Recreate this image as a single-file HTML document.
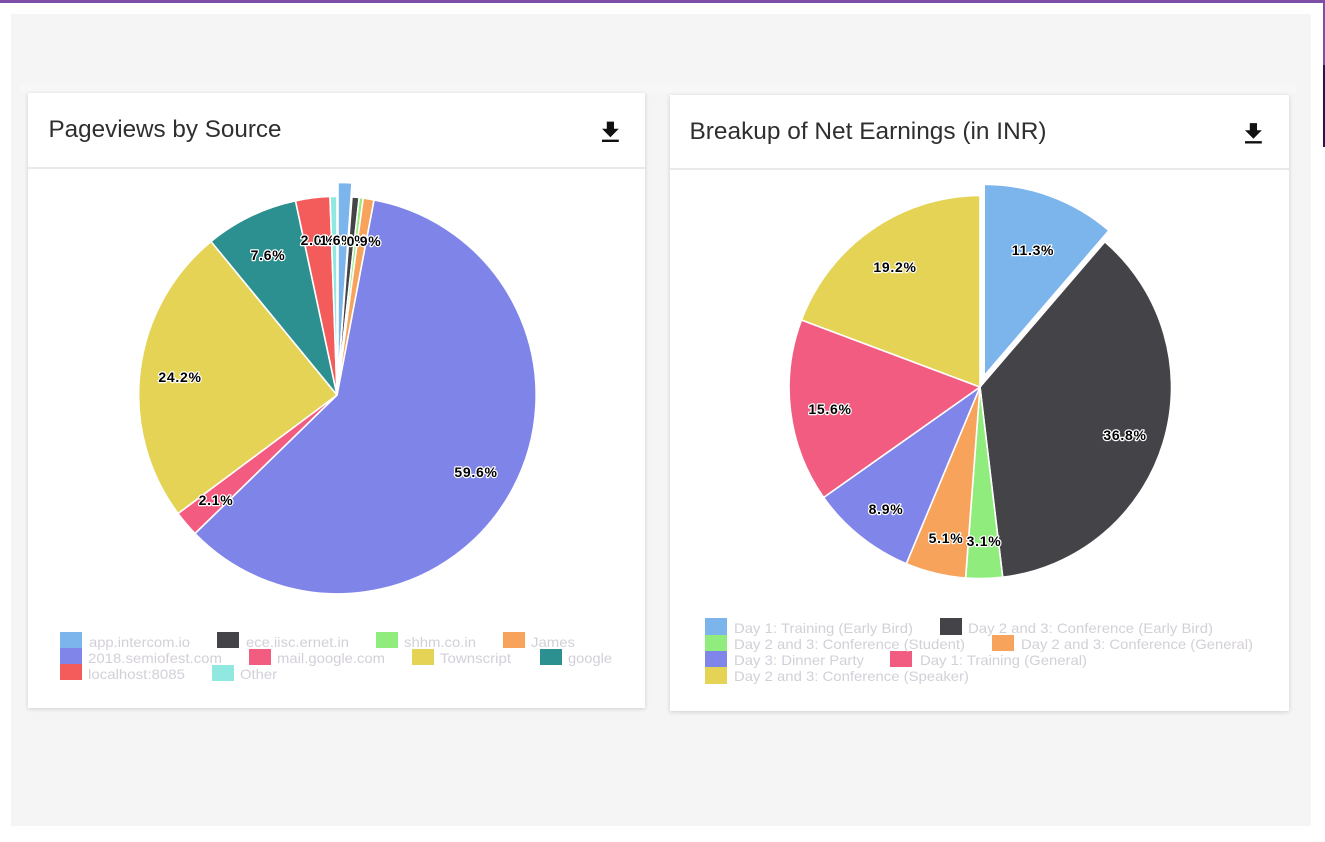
<!DOCTYPE html>
<html><head><meta charset="utf-8"><style>
html,body{margin:0;padding:0;background:#fff;width:1325px;height:842px;overflow:hidden}
svg{display:block;filter:blur(.35px)}
text{font-family:"Liberation Sans",sans-serif}
.t{font-size:24px;fill:#2f2f2f}
.l{font-size:14px;fill:#d3cfd9}
.p{font-size:14px;font-weight:bold;fill:#000;stroke:#fff;stroke-width:2.4px;paint-order:stroke;stroke-linejoin:round;text-anchor:middle;letter-spacing:.7px}
.s path{stroke:#fff;stroke-width:1.6}
</style></head><body>
<svg width="1325" height="842" viewBox="0 0 1325 842" xmlns="http://www.w3.org/2000/svg">
<defs><filter id="sh" x="-5%" y="-5%" width="110%" height="110%"><feDropShadow dx="0" dy="1" stdDeviation="2" flood-color="#000" flood-opacity=".16"/></filter></defs>
<rect x="0" y="0" width="1325" height="842" fill="#fff"/>
<rect x="0" y="0" width="1325" height="3" fill="#7d4ea6"/>
<rect x="1323" y="0" width="2" height="65" fill="#7f4fa8"/>
<rect x="1323" y="65" width="2" height="82" fill="#2e1055"/>
<rect x="11" y="14" width="1300" height="812" fill="#f5f5f5"/>
<rect x="20" y="85" width="1276" height="8" fill="#f7f7f7"/>

<rect x="28" y="93" width="617" height="615" fill="#fff" filter="url(#sh)"/>
<rect x="28" y="167" width="617" height="2" fill="#e9e9e9"/>
<rect x="670" y="95" width="619" height="616" fill="#fff" filter="url(#sh)"/>
<rect x="670" y="168" width="619" height="2" fill="#e9e9e9"/>

<text class="t" x="48.5" y="137" textLength="233" lengthAdjust="spacingAndGlyphs">Pageviews by Source</text>
<text class="t" x="689.5" y="139" textLength="357" lengthAdjust="spacingAndGlyphs">Breakup of Net Earnings (in INR)</text>
<path transform="translate(596 118) scale(1.2)" fill="#111" d="M19 9h-4V3H9v6H5l7 7 7-7zM5 18v2h14v-2H5z"/>
<path transform="translate(1239 119.500) scale(1.2)" fill="#111" d="M19 9h-4V3H9v6H5l7 7 7-7zM5 18v2h14v-2H5z"/>

<g class="s">
<path fill="#7f84e9" d="M337 395L374 200A198.600 198.600 0 1 1 195 533.500Z"/>
<path fill="#f45b81" d="M337 395L195 533.500A198.600 198.600 0 0 1 178 513.500Z"/>
<path fill="#e4d354" d="M337 395L178 513.500A198.600 198.600 0 0 1 211 241.500Z"/>
<path fill="#2b908f" d="M337 395L211 241.500A198.600 198.600 0 0 1 295.500 200.900Z"/>
<path fill="#f45b5b" d="M337 395L295.500 200.900A198.600 198.600 0 0 1 330 196.500Z"/>
<path fill="#91e8e1" d="M337 395L330 196.500A198.600 198.600 0 0 1 337 196.400Z"/>
<path fill="#7cb5ec" d="M338 381L338 182.400A198.600 198.600 0 0 1 352 183Z"/>
<path fill="#434348" d="M337 395L352 197A198.600 198.600 0 0 1 359.200 197.600Z"/>
<path fill="#90ed7d" d="M337 395L359.200 197.600A198.600 198.600 0 0 1 363.200 198.100Z"/>
<path fill="#f7a35c" d="M337 395L363.200 198.100A198.600 198.600 0 0 1 374 200Z"/>
</g>
<g class="s">
<path fill="#7cb5ec" d="M984.200 375.800L984.200 184.300A191.500 191.500 0 0 1 1108.900 230.500Z"/>
<path fill="#434348" d="M980 387L1104.800 241.800A191.500 191.500 0 0 1 1002.700 577.200Z"/>
<path fill="#90ed7d" d="M980 387L1002.700 577.200A191.500 191.500 0 0 1 965.600 578Z"/>
<path fill="#f7a35c" d="M980 387L965.600 578A191.500 191.500 0 0 1 906.300 563.700Z"/>
<path fill="#8085e9" d="M980 387L906.300 563.700A191.500 191.500 0 0 1 823.600 497.500Z"/>
<path fill="#f15c80" d="M980 387L823.600 497.500A191.500 191.500 0 0 1 801.500 320Z"/>
<path fill="#e4d354" d="M980 387L801.500 320A191.500 191.500 0 0 1 980 195.500Z"/>
</g>

<text class="p" x="476" y="477">59.6%</text>
<text class="p" x="216" y="505">2.1%</text>
<text class="p" x="180" y="382">24.2%</text>
<text class="p" x="268" y="260">7.6%</text>
<text class="p" x="318" y="245">2.0%</text>
<text class="p" x="350" y="245">0.3%</text>
<text class="p" x="337" y="245">1.6%</text>
<text class="p" x="364" y="246">0.9%</text>

<text class="p" x="1033" y="255">11.3%</text>
<text class="p" x="1125" y="440">36.8%</text>
<text class="p" x="946" y="543">5.1%</text>
<text class="p" x="984" y="546">3.1%</text>
<text class="p" x="886" y="514">8.9%</text>
<text class="p" x="830" y="414">15.6%</text>
<text class="p" x="895" y="272">19.2%</text>

<rect x="60" y="632" width="22" height="16" fill="#7cb5ec"/>
<rect x="60" y="648" width="22" height="16" fill="#8085e9"/>
<rect x="60" y="664" width="22" height="16" fill="#f45b5b"/>
<rect x="217" y="632" width="22" height="16" fill="#434348"/>
<rect x="376" y="632" width="22" height="16" fill="#90ed7d"/>
<rect x="503" y="632" width="22" height="16" fill="#f7a35c"/>
<rect x="249" y="649" width="22" height="16" fill="#f15c80"/>
<rect x="412" y="649" width="22" height="16" fill="#e4d354"/>
<rect x="540" y="649" width="22" height="16" fill="#2b908f"/>
<rect x="212" y="665" width="22" height="16" fill="#91e8e1"/>

<text class="l" x="89" y="647" textLength="101" lengthAdjust="spacingAndGlyphs">app.intercom.io</text>
<text class="l" x="246" y="647" textLength="103" lengthAdjust="spacingAndGlyphs">ece.iisc.ernet.in</text>
<text class="l" x="404" y="647" textLength="72" lengthAdjust="spacingAndGlyphs">shhm.co.in</text>
<text class="l" x="531" y="647" textLength="44" lengthAdjust="spacingAndGlyphs">James</text>
<text class="l" x="88" y="663" textLength="134" lengthAdjust="spacingAndGlyphs">2018.semiofest.com</text>
<text class="l" x="277" y="663" textLength="108" lengthAdjust="spacingAndGlyphs">mail.google.com</text>
<text class="l" x="440" y="663" textLength="71" lengthAdjust="spacingAndGlyphs">Townscript</text>
<text class="l" x="568" y="663" textLength="44" lengthAdjust="spacingAndGlyphs">google</text>
<text class="l" x="88" y="679" textLength="97" lengthAdjust="spacingAndGlyphs">localhost:8085</text>
<text class="l" x="240" y="679" textLength="37" lengthAdjust="spacingAndGlyphs">Other</text>

<rect x="705" y="618" width="22" height="17" fill="#7cb5ec"/>
<rect x="705" y="635" width="22" height="16" fill="#90ed7d"/>
<rect x="705" y="651" width="22" height="16" fill="#8085e9"/>
<rect x="705" y="667" width="22" height="17" fill="#e4d354"/>
<rect x="940" y="618" width="22" height="17" fill="#434348"/>
<rect x="992" y="635" width="22" height="16" fill="#f7a35c"/>
<rect x="890" y="651" width="22" height="16" fill="#f15c80"/>

<text class="l" x="734" y="633" textLength="179" lengthAdjust="spacingAndGlyphs">Day 1: Training (Early Bird)</text>
<text class="l" x="968" y="633" textLength="245" lengthAdjust="spacingAndGlyphs">Day 2 and 3: Conference (Early Bird)</text>
<text class="l" x="734" y="649" textLength="231" lengthAdjust="spacingAndGlyphs">Day 2 and 3: Conference (Student)</text>
<text class="l" x="1021" y="649" textLength="232" lengthAdjust="spacingAndGlyphs">Day 2 and 3: Conference (General)</text>
<text class="l" x="734" y="665" textLength="130" lengthAdjust="spacingAndGlyphs">Day 3: Dinner Party</text>
<text class="l" x="920" y="665" textLength="167" lengthAdjust="spacingAndGlyphs">Day 1: Training (General)</text>
<text class="l" x="734" y="681" textLength="235" lengthAdjust="spacingAndGlyphs">Day 2 and 3: Conference (Speaker)</text>
</svg>
</body></html>
